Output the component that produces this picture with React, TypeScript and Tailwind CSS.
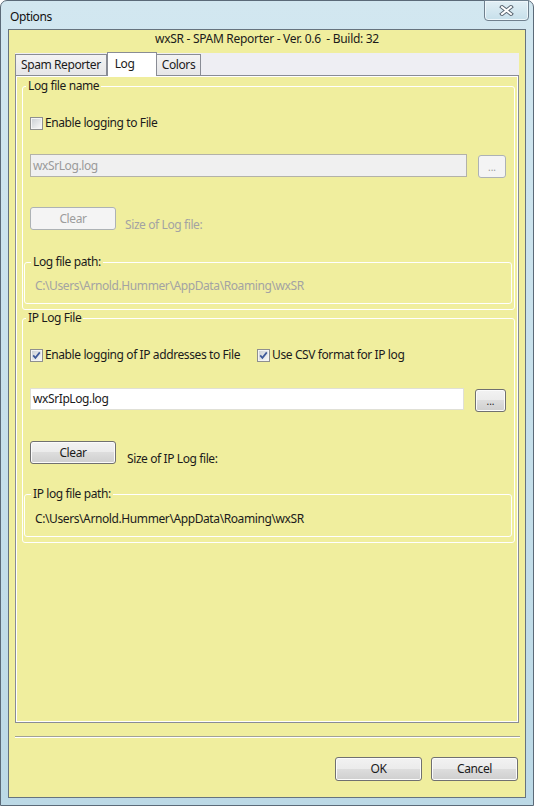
import type { ReactNode } from "react";
import clsx from "clsx";

const LOG_PATH = "C:\\Users\\Arnold.Hummer\\AppData\\Roaming\\wxSR";

function CheckBox({ checked }: { checked?: boolean }) {
  return (
    <span className="flex h-[13px] w-[13px] shrink-0 items-center justify-center border border-[#8e8f8f] bg-[#f4f4f4]">
      <span className="flex h-[9px] w-[9px] items-center justify-center bg-[linear-gradient(135deg,#cdd1d6,#f7f7f7)]">
        {checked && (
          <svg width="9" height="9" viewBox="0 0 9 9">
            <path d="M1.2 4.4 L3.4 6.9 L7.8 1.4" fill="none" stroke="#3f5a9a" strokeWidth="1.7" />
          </svg>
        )}
      </span>
    </span>
  );
}

function WinButton({
  children,
  disabled,
  className,
}: {
  children: ReactNode;
  disabled?: boolean;
  className?: string;
}) {
  return (
    <button
      className={clsx(
        "flex shrink-0 items-center justify-center rounded-[3px] border leading-none",
        disabled
          ? "border-[#adb2b5] bg-[#f4f4f4] text-[#9c9c9c]"
          : "border-[#707070] bg-[linear-gradient(#f2f2f2,#ebebeb_50%,#dddddd_50%,#cfcfcf)] text-[#1b1b1b] shadow-[inset_0_0_0_1px_#fbfbfb]",
        className,
      )}
    >
      {children}
    </button>
  );
}

function GroupBox({ label, className, children }: { label: string; className?: string; children: ReactNode }) {
  return (
    <fieldset className={clsx("rounded-[3px] border border-white", className)}>
      <legend className="-ml-[4px] px-[2px] leading-[16px]">{label}</legend>
      {children}
    </fieldset>
  );
}

function CheckRow({ label, checked }: { label: string; checked?: boolean }) {
  return (
    <label className="flex h-[16px] items-center gap-[2px]">
      <CheckBox checked={checked} />
      <span className="leading-[16px]">{label}</span>
    </label>
  );
}

export default function App() {
  return (
    <div className="h-[806px] w-[534px] font-['Noto_Sans',sans-serif] text-[12px] tracking-[-0.4px] text-[#1b1b1b]">
      <div className="relative flex h-full flex-col rounded-t-[7px] border border-[#5b6a78] bg-[linear-gradient(#d2e7f0,#bcd9e6)] px-[7px] pb-[7px]">
        {/* title bar */}
        <div className="flex h-[28px] items-center pl-[2px] pt-[4px] leading-[16px] text-[#111]">Options</div>
        <div className="absolute right-[4px] top-[-1px] flex h-[21px] w-[45px] items-center justify-center rounded-b-[4px] border border-[#6f808e] bg-[linear-gradient(#e2eff5,#c6dfea)] shadow-[inset_0_0_0_1px_#eef6fa]">
          <svg width="15" height="11" viewBox="0 0 15 11">
            <path d="M3 2 L12 9 M12 2 L3 9" stroke="#5a6672" strokeWidth="4" strokeLinecap="square" />
            <path d="M3 2 L12 9 M12 2 L3 9" stroke="#ffffff" strokeWidth="2" strokeLinecap="square" />
          </svg>
        </div>

        {/* client area */}
        <div className="flex flex-1 flex-col border border-[#66737e] bg-[#f0ee9e]">
          <div className="h-[18px] whitespace-pre text-center leading-[18px] tracking-[-0.3px]">
            wxSR - SPAM Reporter - Ver. 0.6  - Build: 32
          </div>

          {/* tabs */}
          <div className="ml-[6px] mr-[6px] mt-[5px] flex h-[22px] items-end bg-[#eeeef3]">
            <div className="flex h-[21px] items-center border border-b-0 border-[#898c95] bg-[linear-gradient(#f3f3f3,#e6e6e8)] px-[5px] leading-none">
              Spam Reporter
            </div>
            <div className="relative z-10 -mb-[1px] flex h-[24px] w-[50px] items-start border border-b-0 border-[#898c95] bg-white pl-[7px] pt-[3px] leading-[16px]">
              Log
            </div>
            <div className="flex h-[21px] items-center border border-b-0 border-l-0 border-[#898c95] bg-[linear-gradient(#f3f3f3,#e6e6e8)] px-[5px] leading-none">
              Colors
            </div>
          </div>

          {/* tab panel */}
          <div className="ml-[6px] mr-[6px] flex flex-1 flex-col border border-[#898c95] shadow-[inset_0_0_0_1px_#ffffff]">
            <GroupBox label="Log file name" className="ml-[6px] mr-[3px] mt-[2px] px-[7px] pb-[5px]">
              <div className="mt-[21px]">
                <CheckRow label="Enable logging to File" />
              </div>
              <div className="mt-[23px] flex items-start">
                <div className="flex h-[23px] w-[437px] items-center border border-[#b3b2a8] bg-[#f0f0f0] pl-[2px] text-[#9a9a9a]">
                  wxSrLog.log
                </div>
                <WinButton disabled className="ml-[11px] mt-[1px] h-[23px] w-[28px] text-[10px] tracking-normal">
                  ...
                </WinButton>
              </div>
              <div className="mt-[29px] flex items-start">
                <WinButton disabled className="h-[23px] w-[86px]">
                  Clear
                </WinButton>
                <span className="ml-[9px] mt-[10px] leading-[16px] text-[#a3a3a3]">Size of Log file:</span>
              </div>
              <GroupBox label="Log file path:" className="-ml-[6px] mr-[-5px] mt-[21px] pb-[9px] pl-[10px]">
                <div className="mt-[8px] leading-[16px] text-[#a3a3a3]">{LOG_PATH}</div>
              </GroupBox>
            </GroupBox>

            <GroupBox label="IP Log File" className="ml-[6px] mr-[3px] px-[7px] pb-[5px]">
              <div className="mt-[21px] flex items-center">
                <CheckRow label="Enable logging of IP addresses to File" checked />
                <span className="ml-[17px]">
                  <CheckRow label="Use CSV format for IP log" checked />
                </span>
              </div>
              <div className="mt-[25px] flex items-start">
                <div className="flex h-[22px] w-[434px] items-center border border-[#e0e0d6] bg-white pl-[2px]">
                  wxSrIpLog.log
                </div>
                <WinButton className="ml-[11px] mt-[1px] h-[23px] w-[31px] text-[10px] tracking-normal">...</WinButton>
              </div>
              <div className="mt-[29px] flex items-start">
                <WinButton className="h-[23px] w-[86px]">Clear</WinButton>
                <span className="ml-[11px] mt-[10px] leading-[16px]">Size of IP Log file:</span>
              </div>
              <GroupBox label="IP log file path:" className="-ml-[6px] mr-[-5px] mt-[19px] pb-[9px] pl-[10px]">
                <div className="mt-[9px] leading-[16px]">{LOG_PATH}</div>
              </GroupBox>
            </GroupBox>
          </div>

          {/* separator */}
          <div className="ml-[6px] mr-[5px] mt-[13px] h-[2px] border-t border-[#a2a196] bg-white" />

          {/* dialog buttons */}
          <div className="mb-[16px] mr-[7px] mt-[19px] flex justify-end gap-[9px]">
            <WinButton className="h-[24px] w-[87px]">OK</WinButton>
            <WinButton className="h-[24px] w-[87px]">Cancel</WinButton>
          </div>
        </div>
      </div>
    </div>
  );
}
